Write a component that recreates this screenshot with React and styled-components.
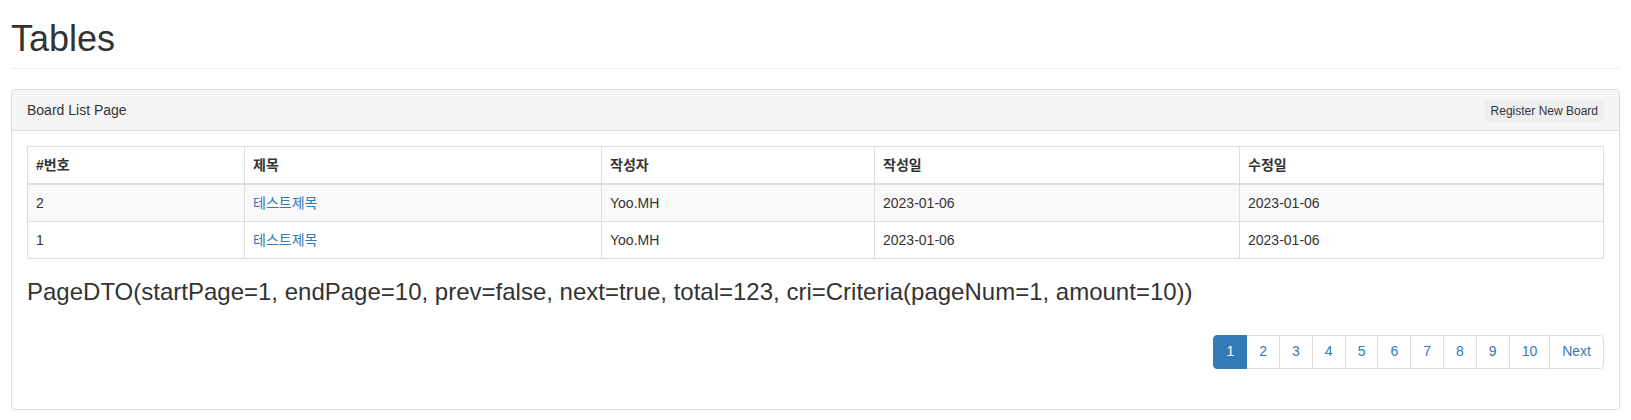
import React from "react";
import styled, { createGlobalStyle } from "styled-components";

const GlobalStyle = createGlobalStyle`
  * { box-sizing: border-box; }
  html, body { margin: 0; padding: 0; background: #fff; }
  body {
    font-family: "Liberation Sans", Arial, "Noto Sans CJK KR", sans-serif;
    font-size: 14px;
    line-height: 1.42857;
    color: #333;
  }
`;

const Page = styled.div`
  padding: 0 11px;
`;

const PageHeader = styled.h1`
  margin: 19px 0 20px;
  padding-bottom: 9px;
  border-bottom: 1px solid #eee;
  font-size: 36px;
  font-weight: 500;
  line-height: 1.1;
  color: #333;
`;

const Panel = styled.div`
  background: #fff;
  border: 1px solid #ddd;
  border-radius: 4px;
  box-shadow: 0 1px 1px rgba(0, 0, 0, 0.05);
`;

const PanelHeading = styled.div`
  display: flex;
  justify-content: space-between;
  align-items: flex-start;
  height: 41px;
  padding: 10px 15px;
  background: #f5f5f5;
  border-bottom: 1px solid #ddd;
  border-radius: 3px 3px 0 0;
  color: #333;
`;

const HeadingTitle = styled.span`
  font-size: 14px;
  line-height: 20px;
`;

const SmallButton = styled.button`
  font-family: inherit;
  font-size: 12px;
  line-height: 1.5;
  padding: 1px 5px;
  color: #333;
  background: #efefef;
  border: 1px solid transparent;
  border-radius: 3px;
  cursor: pointer;
`;

const PanelBody = styled.div`
  padding: 15px;
`;

const Table = styled.table`
  width: 100%;
  table-layout: fixed;
  border-collapse: collapse;
  border-spacing: 0;
  border: 1px solid #ddd;
  margin-bottom: 20px;
`;

const Col = styled.col`
  width: ${(p) => p.$w}px;
`;

const Th = styled.th`
  text-align: left;
  font-weight: bold;
  padding: 8px;
  line-height: 20px;
  vertical-align: bottom;
  border: 1px solid #ddd;
  border-bottom-width: 2px;
`;

const Tr = styled.tr`
  background: ${(p) => (p.$striped ? "#f9f9f9" : "#fff")};
`;

const Td = styled.td`
  padding: 8px;
  line-height: 20px;
  vertical-align: top;
  border: 1px solid #ddd;
`;

const TitleLink = styled.a`
  color: #337ab7;
  text-decoration: none;
`;

const Summary = styled.h3`
  margin: 20px 0 10px;
  font-size: 24px;
  font-weight: 500;
  line-height: 1.1;
  color: #333;
`;

const PagerRow = styled.div`
  display: flex;
  justify-content: flex-end;
`;

const Pagination = styled.ul`
  display: flex;
  list-style: none;
  padding: 0;
  margin: 20px 0 25px;
`;

const PageItem = styled.li`
  display: block;
  margin-left: -1px;
  &:first-child { margin-left: 0; }
`;

const PageLink = styled.a`
  position: relative;
  display: block;
  padding: 6px 12px;
  line-height: 1.42857;
  font-size: 14px;
  text-decoration: none;
  color: ${(p) => (p.$active ? "#fff" : "#337ab7")};
  background: ${(p) => (p.$active ? "#337ab7" : "#fff")};
  border: 1px solid ${(p) => (p.$active ? "#337ab7" : "#ddd")};
  z-index: ${(p) => (p.$active ? 3 : 1)};
  border-radius: ${(p) =>
    p.$first ? "4px 0 0 4px" : p.$last ? "0 4px 4px 0" : "0"};
`;

const rows = [
  { bno: 2, title: "테스트제목", writer: "Yoo.MH", reg: "2023-01-06", upd: "2023-01-06" },
  { bno: 1, title: "테스트제목", writer: "Yoo.MH", reg: "2023-01-06", upd: "2023-01-06" },
];

const pages = ["1", "2", "3", "4", "5", "6", "7", "8", "9", "10", "Next"];

export default function App() {
  return (
    <>
      <GlobalStyle />
      <Page>
        <PageHeader>Tables</PageHeader>
        <Panel>
          <PanelHeading>
            <HeadingTitle>Board List Page</HeadingTitle>
            <SmallButton type="button">Register New Board</SmallButton>
          </PanelHeading>
          <PanelBody>
            <Table>
              <colgroup>
                <Col $w={217} />
                <Col $w={357} />
                <Col $w={273} />
                <Col $w={365} />
                <Col $w={364} />
              </colgroup>
              <thead>
                <tr>
                  <Th>#번호</Th>
                  <Th>제목</Th>
                  <Th>작성자</Th>
                  <Th>작성일</Th>
                  <Th>수정일</Th>
                </tr>
              </thead>
              <tbody>
                {rows.map((r, i) => (
                  <Tr key={r.bno} $striped={i % 2 === 0}>
                    <Td>{r.bno}</Td>
                    <Td>
                      <TitleLink href="#">{r.title}</TitleLink>
                    </Td>
                    <Td>{r.writer}</Td>
                    <Td>{r.reg}</Td>
                    <Td>{r.upd}</Td>
                  </Tr>
                ))}
              </tbody>
            </Table>
            <Summary>
              PageDTO(startPage=1, endPage=10, prev=false, next=true, total=123,
              cri=Criteria(pageNum=1, amount=10))
            </Summary>
            <PagerRow>
              <Pagination>
                {pages.map((p, i) => (
                  <PageItem key={p}>
                    <PageLink
                      href="#"
                      $active={i === 0}
                      $first={i === 0}
                      $last={i === pages.length - 1}
                    >
                      {p}
                    </PageLink>
                  </PageItem>
                ))}
              </Pagination>
            </PagerRow>
          </PanelBody>
        </Panel>
      </Page>
    </>
  );
}
